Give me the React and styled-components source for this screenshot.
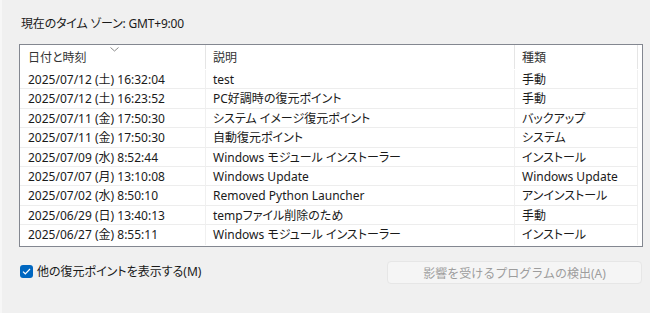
import React from 'react';
import styled, { createGlobalStyle } from 'styled-components';

const GlobalStyle = createGlobalStyle`
  html, body {
    margin: 0;
    padding: 0;
    background: #f0f0f0;
  }
  body {
    font-family: "Noto Sans", "Noto Sans CJK JP", sans-serif;
    font-feature-settings: "palt";
  }
`

const Page = styled.div`
  width: 650px;
  height: 313px;
  box-sizing: border-box;
  padding: 15px 8px 0 19px;
  display: flex;
  flex-direction: column;
  background: #f0f0f0;
  border-left: 2px solid #f7f7f7;
`

const Title = styled.div`
  font-size: 12px;
  line-height: 18px;
  color: #1a1a1a;
  height: 18px;
  letter-spacing: -0.2px;
`

const TableBox = styled.div`
  margin-top: 11px;
  margin-left: -2px;
  width: 624px;
  height: 203px;
  box-sizing: border-box;
  border: 1px solid #838790;
  background: #fff;
  overflow: hidden;
`

const Grid = styled.div`
  display: grid;
  grid-template-columns: 186px 309px 123px;
`

const HeadCell = styled.div`
  position: relative;
  height: 25px;
  line-height: 25px;
  padding-left: ${({ first }) => (first ? 8 : 7)}px;
  font-size: 12px;
  color: #333;
  white-space: nowrap;

  &::after {
    content: '';
    position: absolute;
    right: 0;
    top: 0;
    height: 24px;
    border-right: 1px solid #e5e5e5;
  }
`

const SortMark = styled.svg`
  position: absolute;
  left: 90px;
  top: 2px;
`

const Cell = styled.div`
  height: 19.4px;
  line-height: 19px;
  box-sizing: border-box;
  padding-left: ${({ first }) => (first ? 8 : 7)}px;
  font-size: 12px;
  color: #1a1a1a;
  white-space: nowrap;
  overflow: hidden;
  border-right: 1px solid #f0f0f0;
  border-bottom: ${({ last }) => (last ? 'none' : '1px solid #ededed')};
`

const Footer = styled.div`
  display: flex;
  justify-content: space-between;
  align-items: flex-start;
  margin-top: 14px;
  margin-left: -1px;
`

const CheckRow = styled.label`
  display: flex;
  align-items: center;
  gap: 4px;
  margin-top: 1px;
  font-size: 12px;
  color: #1a1a1a;
`

const Box = styled.span`
  width: 13px;
  height: 13px;
  border-radius: 3px;
  background: #0067c0;
  display: flex;
  align-items: center;
  justify-content: center;
`

const Button = styled.button`
  width: 255px;
  height: 23px;
  margin-right: 0;
  border: 1px solid #e6e6e6;
  border-radius: 4px;
  background: #f5f5f5;
  color: #9d9d9d;
  font-family: inherit;
  font-size: 12px;
  padding: 0;
`

const rows = [
  ['2025/07/12 (土) 16:32:04', 'test', '手動'],
  ['2025/07/12 (土) 16:23:52', 'PC好調時の復元ポイント', '手動'],
  ['2025/07/11 (金) 17:50:30', 'システム イメージ復元ポイント', 'バックアップ'],
  ['2025/07/11 (金) 17:50:30', '自動復元ポイント', 'システム'],
  ['2025/07/09 (水) 8:52:44', 'Windows モジュール インストーラー', 'インストール'],
  ['2025/07/07 (月) 13:10:08', 'Windows Update', 'Windows Update'],
  ['2025/07/02 (水) 8:50:10', 'Removed Python Launcher', 'アンインストール'],
  ['2025/06/29 (日) 13:40:13', 'tempファイル削除のため', '手動'],
  ['2025/06/27 (金) 8:55:11', 'Windows モジュール インストーラー', 'インストール'],
]

const App = () => (
  <Page>
    <GlobalStyle />
    <Title>現在のタイム ゾーン: GMT+9:00</Title>
    <TableBox>
      <Grid>
        <HeadCell first>
          日付と時刻
          <SortMark width="9" height="5" viewBox="0 0 9 5">
            <polyline points="0.5,0.5 4.5,4 8.5,0.5" fill="none" stroke="#8a8a8a" strokeWidth="1" />
          </SortMark>
        </HeadCell>
        <HeadCell>説明</HeadCell>
        <HeadCell>種類</HeadCell>
        {rows.map((r, i) =>
          r.map((text, j) => (
            <Cell key={`${i}-${j}`} first={j === 0} last={i === rows.length - 1}>
              {text}
            </Cell>
          ))
        )}
      </Grid>
    </TableBox>
    <Footer>
      <CheckRow>
        <Box>
          <svg width="9" height="7" viewBox="0 0 9 7">
            <polyline points="1,3.6 3.3,5.8 8,1" fill="none" stroke="#fff" strokeWidth="1.2" />
          </svg>
        </Box>
        他の復元ポイントを表示する(M)
      </CheckRow>
      <Button disabled>影響を受けるプログラムの検出(A)</Button>
    </Footer>
  </Page>
);

export default App;
